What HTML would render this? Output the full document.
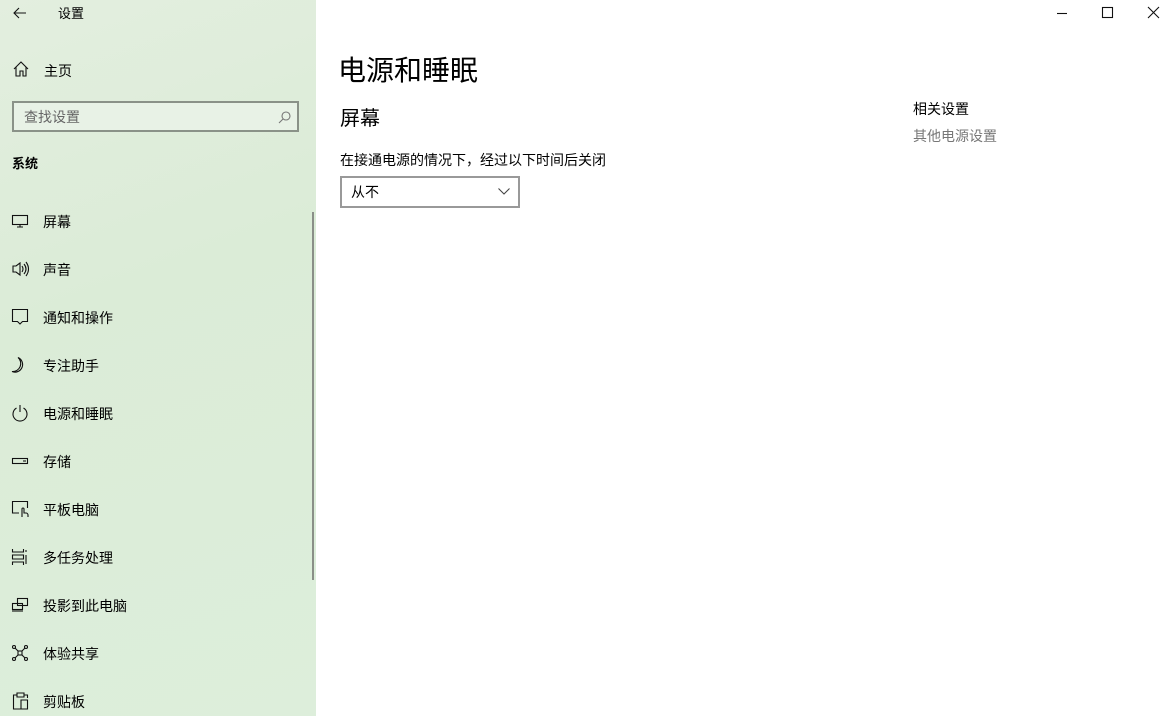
<!DOCTYPE html>
<html><head><meta charset="utf-8">
<style>
*{margin:0;padding:0;box-sizing:border-box}
html,body{width:1173px;height:716px;overflow:hidden;background:#fff;font-family:"Liberation Sans","Noto Sans CJK SC",sans-serif;color:#000}
#side{position:absolute;left:0;top:0;width:316px;height:716px;background:linear-gradient(160deg,#e3eedf 0%,#dbecd7 40%,#ddeedb 100%)}
.t{position:absolute;white-space:nowrap;font-size:14px;line-height:18px}
svg{position:absolute;overflow:visible}
svg *{fill:none;stroke:#111;stroke-width:1.1}
#search{position:absolute;left:12px;top:101px;width:287px;height:31px;border:2px solid #8a9288;background:#e8f2e6}
#scroll{position:absolute;left:312px;top:212px;width:2px;height:368px;background:#8a8f88}
#dd{position:absolute;left:340px;top:176px;width:180px;height:32px;border:2px solid #999;background:#fff}
</style></head><body>
<div id="side">
  <svg style="left:12px;top:6px" width="16" height="14"><path d="M14 7H2M7 2L2 7l5 5"/></svg>
  <div class="t" style="left:58px;top:5px;font-size:13px">设置</div>
  <svg style="left:13px;top:61px" width="16" height="16"><path d="M1 8L8 1l7 7M3 6v9h4v-5h3v5h3V6"/></svg>
  <div class="t" style="left:44px;top:62px">主页</div>
  <div id="search"><div class="t" style="left:10px;top:5px;color:#666">查找设置</div>
    <svg style="left:265px;top:8px" width="12" height="12"><circle cx="7" cy="5" r="4" style="stroke:#777"/><path d="M4 8L0 12" style="stroke:#777"/></svg></div>
  <div class="t" style="left:12px;top:155px;font-weight:bold;font-size:13px">系统</div>
  <div id="scroll"></div>

  <svg style="left:12px;top:215px" width="16" height="12"><rect x="0.5" y="0.5" width="15" height="9"/><path d="M8 10v2M5 12h6"/></svg>
  <div class="t" style="left:43px;top:213px">屏幕</div>
  <svg style="left:12px;top:262px" width="18" height="14"><path d="M1 4h3l4-3v12l-4-3H1z M10 4q2 3 0 6 M12 2q4 5 0 10 M14 0q5 7 0 14"/></svg>
  <div class="t" style="left:43px;top:261px">声音</div>
  <svg style="left:12px;top:309px" width="16" height="16"><path d="M0.5 0.5h15v12h-5l-2.5 2.5-2.5-2.5h-5z"/></svg>
  <div class="t" style="left:43px;top:309px">通知和操作</div>
  <svg style="left:12px;top:357px" width="16" height="17"><path d="M6 0.5a8 8 0 0 1-6 14A7 7 0 1 0 6 0.5z"/></svg>
  <div class="t" style="left:43px;top:357px">专注助手</div>
  <svg style="left:12px;top:405px" width="16" height="16"><path d="M4.5 3a7 7 0 1 0 7 0 M8 0v7"/></svg>
  <div class="t" style="left:43px;top:405px">电源和睡眠</div>
  <svg style="left:12px;top:458px" width="16" height="6"><rect x="0.5" y="0.5" width="15" height="5"/><path d="M11 3h3"/></svg>
  <div class="t" style="left:43px;top:453px">存储</div>
  <svg style="left:12px;top:501px" width="17" height="17"><path d="M7 12H0.5V0.5h15V7 M10 16V8a1 1 0 0 1 2 0v4h2a2 2 0 0 1 2 2v2"/></svg>
  <div class="t" style="left:43px;top:501px">平板电脑</div>
  <svg style="left:12px;top:549px" width="16" height="16"><path d="M0.5 0v3h11V0 M0.5 16v-3h11v3 M0.5 6v4h11V6z M14 1v2 M14 6v9"/></svg>
  <div class="t" style="left:43px;top:549px">多任务处理</div>
  <svg style="left:12px;top:598px" width="16" height="14"><rect x="5.5" y="0.5" width="10" height="7"/><rect x="0.5" y="5.5" width="10" height="6"/><path d="M0 13h11"/></svg>
  <div class="t" style="left:43px;top:597px">投影到此电脑</div>
  <svg style="left:12px;top:645px" width="16" height="16"><circle cx="2" cy="2" r="1.5"/><circle cx="14" cy="2" r="1.5"/><circle cx="2" cy="14" r="1.5"/><circle cx="14" cy="14" r="1.5"/><rect x="6" y="6" width="4" height="4"/><path d="M3 3l3 3M13 3l-3 3M3 13l3-3M13 13l-3-3"/></svg>
  <div class="t" style="left:43px;top:645px">体验共享</div>
  <svg style="left:13px;top:692px" width="15" height="18"><path d="M4 3H0.5v14H8 M11 3h3.5v3 M4 1h7v4H4z M8 8h6.5v9H8z"/></svg>
  <div class="t" style="left:43px;top:693px">剪贴板</div>
</div>

<div class="t" style="left:338px;top:53px;font-size:28px;line-height:36px">电源和睡眠</div>
<div class="t" style="left:340px;top:106px;font-size:20px;line-height:26px">屏幕</div>
<div class="t" style="left:340px;top:151px;font-size:14px">在接通电源的情况下，经过以下时间后关闭</div>
<div id="dd"><div class="t" style="left:9px;top:5px">从不</div>
  <svg style="left:156px;top:10px" width="12" height="7"><path d="M0.5 0.5L6 6l5.5-5.5" style="stroke:#444"/></svg></div>
<div class="t" style="left:913px;top:100px;font-size:14px">相关设置</div>
<div class="t" style="left:913px;top:127px;font-size:14px;color:#777">其他电源设置</div>

<svg style="left:1057px;top:13px" width="11" height="2"><path d="M0 0.5h10"/></svg>
<svg style="left:1102px;top:7px" width="11" height="11"><rect x="0.5" y="0.5" width="10" height="10"/></svg>
<svg style="left:1148px;top:7px" width="11" height="11"><path d="M0 0l11 11M11 0L0 11"/></svg>
</body></html>
